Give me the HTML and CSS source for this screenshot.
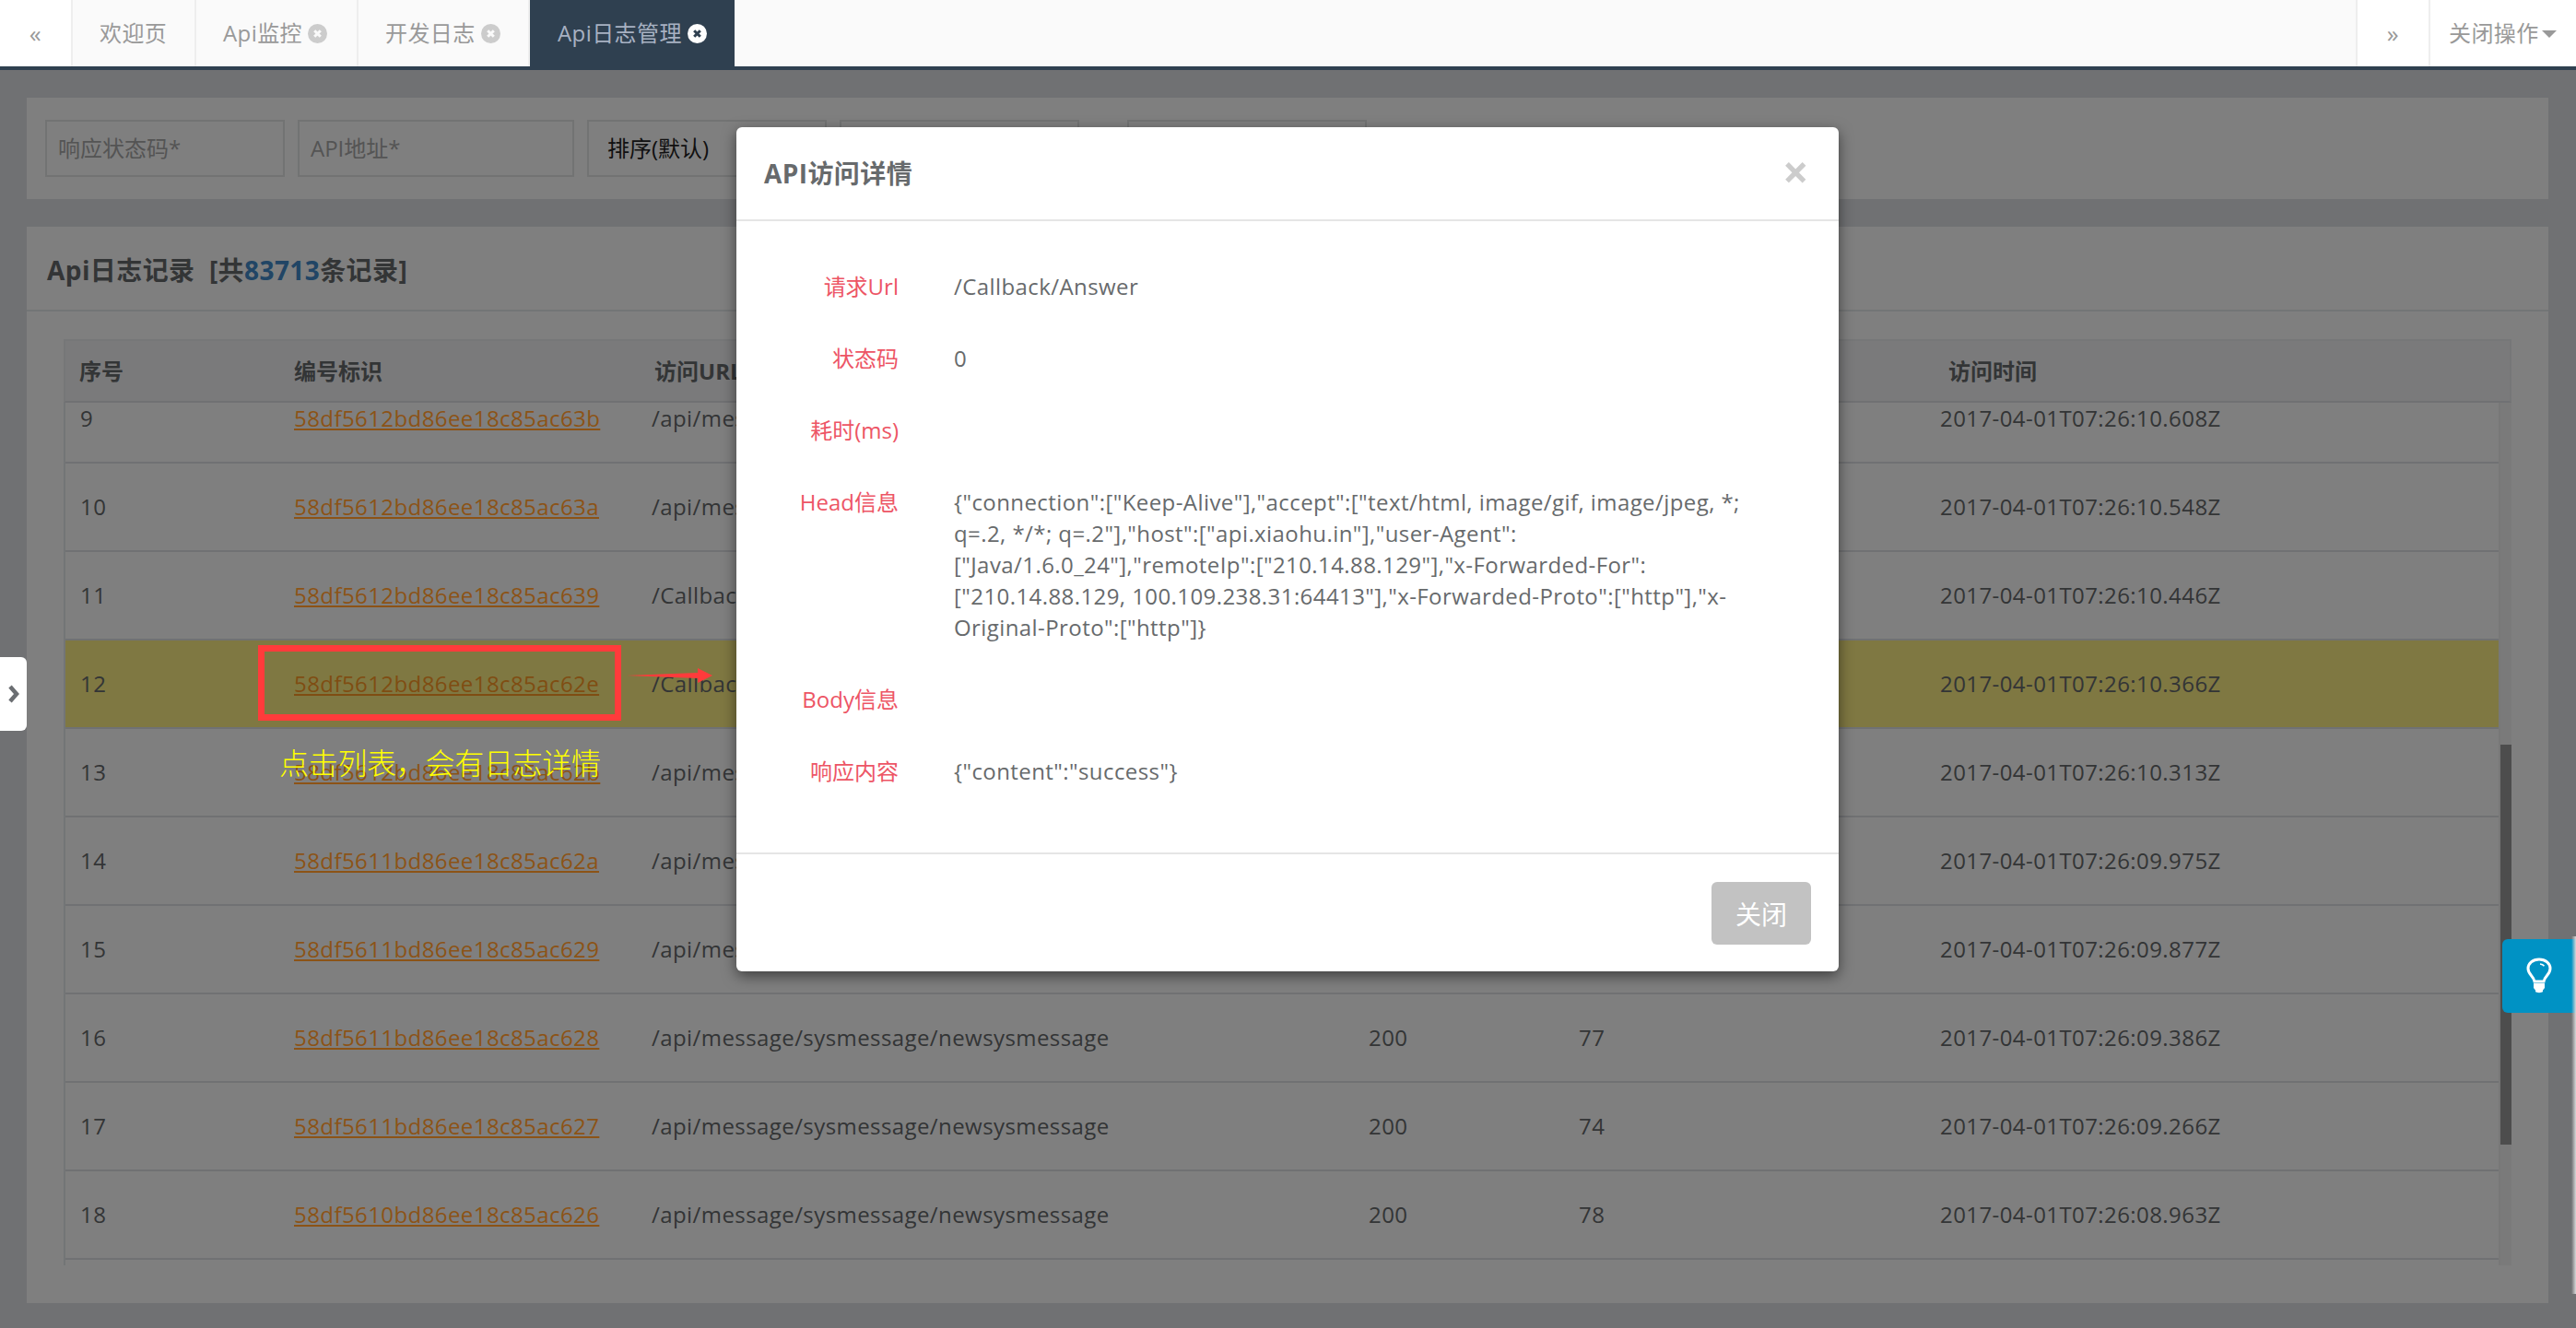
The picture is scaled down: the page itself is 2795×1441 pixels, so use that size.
FILE: index.html
```html
<!DOCTYPE html>
<html lang="zh-CN">
<head>
  <meta charset="UTF-8" />
  <title>Api日志管理</title>
  <link rel="stylesheet" href="styles.css">
</head>
<body>
  <div class="tabs">
    <div class="tab-arrow tab-arrow-left">«</div>
    <div class="tab">欢迎页</div>
    <div class="tab">Api监控 <svg class="tab-close" viewBox="0 0 21 21"><circle cx="10.5" cy="10.5" r="10.5" fill="#ccc"/><path d="M7.2 7.2l6.6 6.6M13.8 7.2l-6.6 6.6" stroke="#fafafa" stroke-width="3"/></svg></div>
    <div class="tab">开发日志 <svg class="tab-close" viewBox="0 0 21 21"><circle cx="10.5" cy="10.5" r="10.5" fill="#ccc"/><path d="M7.2 7.2l6.6 6.6M13.8 7.2l-6.6 6.6" stroke="#fafafa" stroke-width="3"/></svg></div>
    <div class="tab tab-active">Api日志管理 <svg class="tab-close" viewBox="0 0 21 21"><circle cx="10.5" cy="10.5" r="10.5" fill="#fff"/><path d="M7.2 7.2l6.6 6.6M13.8 7.2l-6.6 6.6" stroke="#2f4050" stroke-width="3"/></svg></div>
    <div class="tab-spacer"></div>
    <div class="tab-arrow tab-arrow-right">»</div>
    <div class="tab-actions">关闭操作<span class="caret"></span></div>
  </div>

  <div class="content">
    <div class="panel filter-panel">
      <div class="field field-first">响应状态码*</div>
      <div class="field field-url">API地址*</div>
      <div class="field field-select">排序(默认)</div>
      <div class="field field-first"></div>
      <div class="field field-first field-last"></div>
    </div>

    <div class="panel log-panel">
      <div class="log-title">Api日志记录 &nbsp;[共<span class="log-count">83713</span>条记录]</div>
      <div class="log-body">
        <div class="log-head">
          <span>序号</span><span>编号标识</span><span>访问URL</span><span>状态码</span><span>耗时(ms)</span><span>访问时间</span>
        </div>
        <div class="log-scroll">
          <div class="log-rows">
            <div class="log-row"><span>9</span><a>58df5612bd86ee18c85ac63b</a><span>/api/message/sysmessage/newsysmessage</span><span></span><span></span><span>2017-04-01T07:26:10.608Z</span></div>
            <div class="log-row"><span>10</span><a>58df5612bd86ee18c85ac63a</a><span>/api/message/sysmessage/newsysmessage</span><span></span><span></span><span>2017-04-01T07:26:10.548Z</span></div>
            <div class="log-row"><span>11</span><a>58df5612bd86ee18c85ac639</a><span>/Callback/Answer</span><span></span><span></span><span>2017-04-01T07:26:10.446Z</span></div>
            <div class="log-row log-row-active"><span>12</span><a>58df5612bd86ee18c85ac62e</a><span>/Callback/Answer</span><span></span><span></span><span>2017-04-01T07:26:10.366Z</span></div>
            <div class="log-row"><span>13</span><a>58df5612bd86ee18c85ac62b</a><span>/api/message/sysmessage/newsysmessage</span><span></span><span></span><span>2017-04-01T07:26:10.313Z</span></div>
            <div class="log-row"><span>14</span><a>58df5611bd86ee18c85ac62a</a><span>/api/message/sysmessage/newsysmessage</span><span></span><span></span><span>2017-04-01T07:26:09.975Z</span></div>
            <div class="log-row"><span>15</span><a>58df5611bd86ee18c85ac629</a><span>/api/message/sysmessage/newsysmessage</span><span></span><span></span><span>2017-04-01T07:26:09.877Z</span></div>
            <div class="log-row"><span>16</span><a>58df5611bd86ee18c85ac628</a><span>/api/message/sysmessage/newsysmessage</span><span>200</span><span>77</span><span>2017-04-01T07:26:09.386Z</span></div>
            <div class="log-row"><span>17</span><a>58df5611bd86ee18c85ac627</a><span>/api/message/sysmessage/newsysmessage</span><span>200</span><span>74</span><span>2017-04-01T07:26:09.266Z</span></div>
            <div class="log-row"><span>18</span><a>58df5610bd86ee18c85ac626</a><span>/api/message/sysmessage/newsysmessage</span><span>200</span><span>78</span><span>2017-04-01T07:26:08.963Z</span></div>
          </div>
          <div class="scroll-track"><div class="scroll-thumb"></div></div>
        </div>
      </div>
    </div>

    <div class="backdrop"></div>

    <!-- annotation drawn over the screenshot -->
    <div class="note-box"></div>
    <svg class="note-arrow" viewBox="0 0 93 16"><path d="M0 8L77 5V0L93 8 77 16V11z" fill="#ff3b3b"/></svg>
    <div class="note-text">点击列表，会有日志详情</div>

    <div class="modal">
      <div class="modal-head">
        <div class="modal-title">API访问详情</div>
        <div class="modal-close">×</div>
      </div>
      <div class="modal-body">
        <div class="detail"><div class="detail-label">请求Url</div><div class="detail-value">/Callback/Answer</div></div>
        <div class="detail"><div class="detail-label">状态码</div><div class="detail-value">0</div></div>
        <div class="detail"><div class="detail-label">耗时(ms)</div><div class="detail-value"></div></div>
        <div class="detail"><div class="detail-label">Head信息</div><div class="detail-value">{"connection":["Keep-Alive"],"accept":["text/html, image/gif, image/jpeg, *;<br>q=.2, */*; q=.2"],"host":["api.xiaohu.in"],"user-Agent":<br>["Java/1.6.0_24"],"remoteIp":["210.14.88.129"],"x-Forwarded-For":<br>["210.14.88.129, 100.109.238.31:64413"],"x-Forwarded-Proto":["http"],"x-<br>Original-Proto":["http"]}</div></div>
        <div class="detail"><div class="detail-label">Body信息</div><div class="detail-value"></div></div>
        <div class="detail"><div class="detail-label">响应内容</div><div class="detail-value">{"content":"success"}</div></div>
      </div>
      <div class="modal-foot"><button class="modal-btn">关闭</button></div>
    </div>
  </div>

  <div class="side-toggle">
    <svg viewBox="0 0 13 20" width="13" height="20"><path d="M3 2l7 8-7 8" fill="none" stroke="#6b6e72" stroke-width="4.5"/></svg>
  </div>

  <div class="tip-btn">
    <svg viewBox="0 0 28 40" width="28" height="40">
      <path d="M14 2C7 2 2 6.500 2 12c0 3.500 1.800 5.700 3.600 7.800 1.600 1.900 3 3.700 3.400 6.200h10c.4-2.500 1.800-4.300 3.400-6.200C24.200 17.700 26 15.500 26 12c0-5.500-5-10-12-10z" fill="none" stroke="#fff" stroke-width="3"/>
      <path d="M15 7c2 .2 3.600 1 4.500 2.300" fill="none" stroke="#fff" stroke-width="1.500"/>
      <path d="M8 28h12v5l-2 2.500V37c-1 1.500-7 1.500-8 0v-1.500L8 33z" fill="#fff"/>
    </svg>
  </div>
  <div class="edge-glow"></div>
</body>
</html>
```

FILE: styles.css
```css
* {
  box-sizing: border-box;
}

body {
  margin: 0;
  height: 100vh;
  overflow: hidden;
  display: flex;
  flex-direction: column;
  background-color: #e0e2e6;
  color: #676a6c;
  font-family: "Open Sans", "Noto Sans CJK SC", sans-serif;
  font-size: 24px;
  letter-spacing: 0.42px;
}

/* top tab strip */
.tabs {
  display: flex;
  height: 76px;
  flex: none;
  background-color: #fff;
  border-bottom: 4px solid #2f4050;
  color: #999;
  line-height: 72px;
}

.tab {
  display: flex;
  align-items: center;
  gap: 6px;
  padding: 0 20px 0 29px;
  background-color: #fafafa;
  border-right: 2px solid #eee;
  white-space: nowrap;
}

.tab:nth-child(2) {
  width: 134px;
}

.tab:nth-child(3) {
  width: 176px;
}

.tab:nth-child(4) {
  width: 186px;
}

.tab-active {
  width: 222px;
  padding-left: 30px;
  background-color: #2f4050;
  border-right: none;
  color: #a7b1c2;
}

.tab-close {
  width: 21px;
  height: 21px;
  flex: none;
}

.tab-spacer {
  flex: 1;
  background-color: #fafafa;
}

.tab-arrow {
  text-align: center;
  font-size: 26px;
}

.tab-arrow-left {
  width: 79px;
  border-right: 2px solid #eee;
}

.tab-arrow-right {
  width: 81px;
  border-left: 2px solid #eee;
  border-right: 2px solid #eee;
}

.tab-actions {
  width: 158px;
  display: flex;
  align-items: center;
  padding-left: 20px;
}

.caret {
  margin-left: 3px;
  margin-top: 2px;
  border-top: 8px solid #999;
  border-left: 8px solid transparent;
  border-right: 8px solid transparent;
}

/* page content, dimmed by the modal */
.content {
  position: relative;
  flex: 1;
  display: flex;
  flex-direction: column;
  gap: 30px;
  padding: 30px 30px 27px 29px;
}

.backdrop {
  position: absolute;
  inset: 0;
  background-color: rgba(0, 0, 0, 0.5);
}

.panel {
  background-color: #fff;
}

.filter-panel {
  height: 110px;
  flex: none;
  display: flex;
  padding: 24px 20px;
  gap: 14px;
}

.field {
  width: 260px;
  height: 62px;
  padding: 0 12px;
  border: 2px solid #e5e6e7;
  line-height: 58px;
  color: #a9a9a9;
  letter-spacing: 0;
}

.field-url {
  width: 300px;
}

.field-select {
  width: 260px;
  padding-left: 20px;
  color: #222;
}

.field-last {
  margin-left: 38px;
}

.log-panel {
  flex: 1;
  display: flex;
  flex-direction: column;
}

.log-title {
  height: 92px;
  flex: none;
  padding-left: 22px;
  border-bottom: 2px solid #e7eaec;
  line-height: 94px;
  font-size: 28px;
  font-weight: bold;
}

.log-count {
  color: #428bca;
}

.log-body {
  flex: 1;
  display: flex;
  flex-direction: column;
  min-height: 0;
  padding: 30px 40px 41px;
}

.log-head {
  display: grid;
  grid-template-columns: 233px 391px 776px 228px 400px 1fr;
  height: 69px;
  flex: none;
  padding-left: 15px;
  background-color: #f5f5f7;
  border: 2px solid #eceef0;
  border-bottom: 2px solid #e0e2e6;
  line-height: 65px;
  font-weight: bold;
  letter-spacing: 0;
}

.log-scroll {
  flex: 1;
  position: relative;
  overflow: hidden;
  border-left: 2px solid #e7eaec;
}

.log-rows {
  margin-top: -30px;
  margin-right: 14px;
}

.log-row {
  display: grid;
  grid-template-columns: 232px 388px 778px 228px 392px 1fr;
  align-items: center;
  height: 96px;
  padding-left: 16px;
  padding-bottom: 2px;
  border-bottom: 2px solid #e0e2e6;
}

/* links sit above the backdrop, their orange stays saturated */
.log-row a {
  position: relative;
  z-index: 1;
  color: #8c5316;
  text-decoration: underline;
}

.log-row-active {
  background-color: #fff085;
}

.log-row-active a {
  color: #7f4d12;
}

.scroll-track {
  position: absolute;
  top: 0;
  right: 0;
  bottom: 0;
  width: 14px;
  background-color: #f5f5f5;
  border-left: 2px solid #f0f0f0;
}

.scroll-thumb {
  position: absolute;
  top: 371px;
  left: 0;
  right: 0;
  height: 434px;
  background-color: #9a9a9a;
}

/* annotation */
.note-box {
  position: absolute;
  z-index: 2;
  left: 280px;
  top: 624px;
  width: 394px;
  height: 82px;
  border: 7px solid #ff3b3b;
}

.note-arrow {
  position: absolute;
  z-index: 2;
  left: 680px;
  top: 649px;
  width: 93px;
  height: 16px;
}

.note-text {
  position: absolute;
  z-index: 2;
  left: 303px;
  top: 730px;
  font-size: 32px;
  line-height: 44px;
  color: #ffff00;
  font-weight: 300;
  letter-spacing: -0.3px;
  white-space: nowrap;
}

/* modal */
.modal {
  position: absolute;
  z-index: 2;
  left: 799px;
  top: 62px;
  width: 1196px;
  height: 916px;
  display: flex;
  flex-direction: column;
  background-color: #fff;
  border-radius: 6px;
  box-shadow: 0 5px 15px rgba(0, 0, 0, 0.5);
}

.modal-head {
  height: 102px;
  flex: none;
  display: flex;
  justify-content: space-between;
  padding: 0 30px;
  border-bottom: 2px solid #e5e5e5;
  line-height: 100px;
}

.modal-title {
  font-size: 28px;
  font-weight: bold;
}

.modal-close {
  margin-right: 2px;
  font-size: 50px;
  line-height: 97px;
  font-weight: bold;
  color: #ccc;
}

.modal-body {
  flex: 1;
  padding-top: 54px;
}

.detail {
  display: flex;
  margin-bottom: 44px;
  line-height: 34px;
}

.detail-label {
  width: 176px;
  flex: none;
  text-align: right;
  color: #ed5565;
  letter-spacing: 0;
}

.detail-value {
  min-height: 34px;
  margin-left: 60px;
  white-space: nowrap;
}

.modal-foot {
  height: 129px;
  flex: none;
  display: flex;
  justify-content: flex-end;
  padding: 30px 30px 0;
  border-top: 2px solid #e5e5e5;
}

.modal-btn {
  width: 108px;
  height: 68px;
  padding: 0;
  border: none;
  border-radius: 6px;
  background-color: #c2c2c2;
  color: #fff;
  font-family: inherit;
  font-size: 28px;
}

/* floating buttons */
.side-toggle {
  position: absolute;
  z-index: 2;
  left: 0;
  top: 713px;
  width: 29px;
  height: 80px;
  display: flex;
  align-items: center;
  justify-content: center;
  background-color: #fff;
  border-radius: 0 6px 6px 0;
}

.tip-btn {
  position: absolute;
  z-index: 2;
  right: 0;
  top: 1019px;
  width: 80px;
  height: 80px;
  display: flex;
  align-items: center;
  justify-content: center;
  background-color: #0092c4;
  border-radius: 6px 0 0 6px;
}

.edge-glow {
  position: absolute;
  z-index: 2;
  right: 0;
  top: 1016px;
  width: 5px;
  height: 388px;
  background: linear-gradient(to right, transparent, #d8d8d8);
}
```
